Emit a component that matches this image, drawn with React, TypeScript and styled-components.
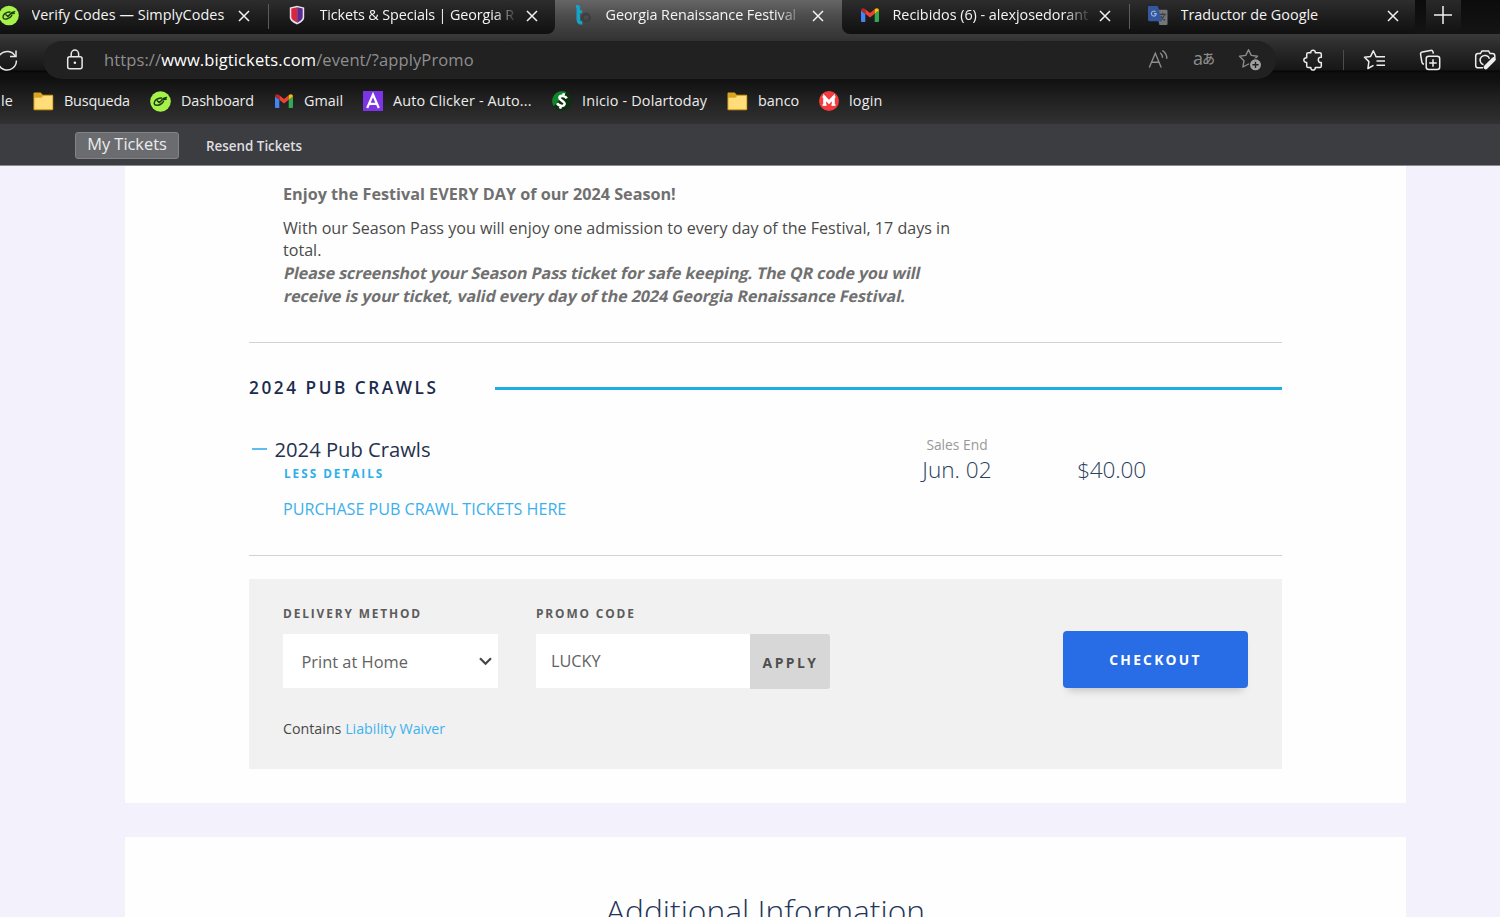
import React from 'react';
import styled, { createGlobalStyle, css } from 'styled-components';

const GlobalStyle = createGlobalStyle`
  * { box-sizing: border-box; }
  html, body { margin: 0; padding: 0; overflow: hidden; }
  body { font-family: "Open Sans", "Noto Sans", "Noto Sans CJK JP", sans-serif; background: #f3f2fc; }
  button, input { font-family: inherit; }
`;

const Screen = styled.div`
  width: 1500px;
  height: 917px;
  overflow: hidden;
  display: flex;
  flex-direction: column;
`;

/* ---------- browser chrome ---------- */

const TabStrip = styled.div`
  flex: none;
  height: 34px;
  display: flex;
  background: linear-gradient(#0c0c0c, #141414);
`;

const TabBox = styled.div<{ $w: number; $active?: boolean; $line?: boolean; $first?: boolean; $cut?: 'l' | 'r' }>`
  flex: none;
  width: ${p => p.$w}px;
  margin-left: ${p => (p.$first ? -19 : 0)}px;
  height: 34px;
  padding: 0 17px 4px 18px;
  display: flex;
  align-items: center;
  background: ${p => (p.$active ? 'linear-gradient(#666666, #4d4d4d 45%, #383838)' : 'linear-gradient(#2d2d2d, #1c1c1c 55%, #101010)')};
  ${p => p.$cut === 'r' && css`border-bottom-right-radius: 8px;`}
  ${p => p.$cut === 'l' && css`border-bottom-left-radius: 8px;`}
  ${p => p.$line && css`
    background: linear-gradient(#5c5c5c, #5c5c5c) right 4px / 1px 25px no-repeat, linear-gradient(#2d2d2d, #1c1c1c 55%, #101010);
  `}
`;

const TabJoin = styled.div`
  flex: none;
  display: flex;
  background: #3a3a3a;
`;

const TabIcon = styled.span`
  flex: none;
  width: 20px;
  height: 20px;
  margin-right: 12.5px;
  display: flex;
`;

const TabTitle = styled.span<{ $ls?: number; $fade?: number }>`
  flex: none;
  width: 198px;
  overflow: hidden;
  white-space: nowrap;
  font-size: 14.4px;
  line-height: 20px;
  color: #f4f4f4;
  letter-spacing: ${p => p.$ls || 0}px;
  ${p => p.$fade && css`
    mask-image: linear-gradient(90deg, #000 ${198 - p.$fade}px, rgba(0, 0, 0, 0.2) 193px);
  `}
`;

const CloseSlot = styled.span`
  flex: none;
  width: 14px;
  margin-left: 7px;
  display: flex;
  justify-content: center;
  padding-top: 2px;
`;

const NewTab = styled.div`
  flex: none;
  width: 35px;
  height: 32px;
  margin-left: 11px;
  display: flex;
  align-items: center;
  justify-content: center;
  padding: 0 2px 2px 0;
  background: linear-gradient(#292929, #131313);
`;

const Toolbar = styled.div`
  flex: none;
  height: 45px;
  display: flex;
  align-items: center;
  padding-top: 6px;
  background: linear-gradient(#3a3a3a 0, #2b2b2b 12px, #161616 36px, #050505 37px, #0e0e0e 39px, #101010 45px);
`;

const ReloadSlot = styled.div`
  flex: none;
  width: 43px;
  height: 38px;
  overflow: hidden;
  display: flex;
  align-items: center;
`;

const AddressBar = styled.div`
  flex: none;
  width: 1233px;
  height: 38px;
  border-radius: 19px;
  background: #212121;
  display: flex;
  align-items: center;
  padding: 0 3px 0 21px;
`;

const Url = styled.div`
  flex: 1;
  margin-left: 18px;
  font-size: 16.5px;
  line-height: 24px;
  letter-spacing: 0.11px;
  color: #8f8f8f;
  b { font-weight: 400; color: #ffffff; }
`;

const Slot = styled.div<{ $w: number }>`
  flex: none;
  width: ${p => p.$w}px;
  display: flex;
  align-items: center;
  justify-content: center;
  color: #8c8c8c;
`;

const LangGlyph = styled.span`
  font-size: 18px;
  line-height: 20px;
  display: flex;
  align-items: center;
  padding-bottom: 3px;
  span { font-size: 13px; font-weight: 500; font-family: "Noto Sans CJK JP", sans-serif; margin-left: -1px; line-height: 20px; }
`;

const Rule = styled.div`
  flex: none;
  width: 1px;
  height: 20px;
  background: #4c4c4c;
`;

const Bookmarks = styled.div`
  flex: none;
  height: 45px;
  display: flex;
  align-items: center;
  padding-bottom: 1px;
  background: linear-gradient(#101010, #1f1f1f 40%, #313131);
  color: #ececec;
  font-size: 14.4px;
  line-height: 20px;
  white-space: nowrap;
`;

const Partial = styled.span`
  flex: none;
  width: 33px;
  padding-left: 1px;
`;

const Bookmark = styled.div<{ $w: number; $ls?: number }>`
  flex: none;
  width: ${p => p.$w}px;
  display: flex;
  align-items: center;
  gap: 10px;
  letter-spacing: ${p => p.$ls || 0}px;
`;

/* ---------- ticket site ---------- */

const SiteBar = styled.div`
  flex: none;
  height: 42px;
  display: flex;
  align-items: flex-start;
  padding: 8px 0 0 75px;
  background: #3c3d41;
  border-bottom: 1px solid #8b8b8f;
`;

const MyTickets = styled.button`
  width: 104px;
  height: 27px;
  padding: 0 0 3px;
  border: 1px solid #828386;
  border-radius: 3px;
  background: #6b6c70;
  color: #ececec;
  font-size: 16.4px;
  line-height: 22px;
`;

const Resend = styled.span`
  margin-left: 27px;
  padding-top: 4px;
  font-size: 13.4px;
  font-weight: 600;
  line-height: 20px;
  color: #dedee0;
`;

const Card = styled.section<{ $h?: number; $gap?: number }>`
  flex: none;
  width: 1281px;
  height: ${p => (p.$h ? `${p.$h}px` : 'auto')};
  margin: ${p => p.$gap || 0}px 0 0 125px;
  padding: 0 124px;
  background: #fefefe;
`;

const Details = styled.div`
  padding: 17px 0 0 34px;
  height: 177px;
  border-bottom: 1px solid #d2d2d2;
  width: 1033px;
  color: #4a4a4a;
  font-size: 16.08px;
  line-height: 22.7px;
  white-space: nowrap;
`;

const Strong = styled.p`
  margin: 0 0 11px;
  font-weight: 700;
  font-size: 16.2px;
  color: #707070;
`;

const Para = styled.p`
  margin: 0;
`;

const Slanted = styled.span`
  display: block;
  font-weight: 700;
  font-size: 16.1px;
  letter-spacing: -0.11px;
  color: #707070;
  transform: skewX(-12deg);
  transform-origin: 0 75%;
`;

const GroupHead = styled.div`
  width: 1033px;
  height: 90px;
  display: flex;
  align-items: center;
`;

const GroupTitle = styled.h2`
  margin: 0;
  width: 246px;
  font-size: 17.2px;
  line-height: 24px;
  font-weight: 600;
  letter-spacing: 2.55px;
  color: #1c2b4d;
  white-space: nowrap;
`;

const GroupLine = styled.div`
  flex: 1;
  height: 3px;
  background: #20ace6;
`;

const TicketRow = styled.div`
  width: 1033px;
  height: 123px;
  display: flex;
  border-bottom: 1px solid #d2d2d2;
`;

const TicketInfo = styled.div`
  width: 643px;
`;

const TicketName = styled.div`
  height: 33px;
  display: flex;
  align-items: center;
  padding-left: 3px;
  color: #24324f;
  font-size: 20.2px;
  line-height: 33px;
`;

const Dash = styled.span`
  width: 15px;
  height: 2px;
  margin-right: 7.5px;
  background: #5dbdf0;
  margin-top: -1px;
`;

const Less = styled.div`
  padding-left: 35px;
  height: 15px;
  line-height: 15px;
  font-size: 11.7px;
  font-weight: 700;
  letter-spacing: 2.02px;
  color: #2bb0ea;
`;

const Purchase = styled.a`
  display: block;
  margin-top: 15.5px;
  padding-left: 34px;
  font-size: 16.12px;
  line-height: 24px;
  color: #3bb0ec;
`;

const Sales = styled.div`
  width: 130px;
  padding-top: 1px;
  text-align: center;
`;

const SalesLabel = styled.div`
  height: 22px;
  line-height: 22px;
  font-size: 13.8px;
  color: #999999;
`;

const Big = styled.div`
  font-size: 22.6px;
  line-height: 28px;
  font-weight: 300;
  color: #2c3e5f;
`;

const Price = styled.div`
  width: 179px;
  padding: 23px 0 0 0;
  letter-spacing: -0.2px;
  text-align: center;
`;

const Panel = styled.div`
  margin-top: 23px;
  width: 1033px;
  height: 190px;
  background: #f1f1f1;
  padding: 25px 34px 0;
`;

const PanelRow = styled.div`
  display: flex;
  height: 86px;
`;

const Field = styled.div<{ $w: number }>`
  width: ${p => p.$w}px;
`;

const Label = styled.div`
  height: 30px;
  line-height: 18px;
  font-size: 11.9px;
  font-weight: 700;
  letter-spacing: 1.87px;
  color: #5c5c5c;
`;

const Select = styled.div`
  width: 215px;
  height: 54px;
  padding: 0 6px 0 18.5px;
  display: flex;
  align-items: center;
  justify-content: space-between;
  background: #ffffff;
  color: #626262;
  font-size: 16.4px;
`;

const PromoRow = styled.div`
  display: flex;
`;

const PromoInput = styled.input`
  width: 214px;
  height: 54px;
  padding: 0 15px;
  border: 0;
  border-radius: 0;
  background: #ffffff;
  color: #626262;
  font-size: 16.3px;
  outline: none;
`;

const Apply = styled.button`
  width: 80px;
  height: 55px;
  padding: 1px 0 0 1px;
  border: 0;
  border-radius: 0 3px 3px 0;
  background: #d7d7d7;
  color: #4e4e4e;
  font-size: 13.9px;
  font-weight: 700;
  letter-spacing: 2.45px;
`;

const Checkout = styled.button`
  width: 185px;
  height: 57px;
  margin: 27px 0 0 auto;
  padding: 0;
  border: 0;
  border-radius: 4px;
  background: #286de6;
  box-shadow: 0 7px 8px -5px rgba(0, 0, 0, 0.22);
  color: #ffffff;
  font-size: 13.8px;
  font-weight: 700;
  letter-spacing: 2.25px;
`;

const Waiver = styled.div`
  margin-top: 26.5px;
  font-size: 14.25px;
  line-height: 24px;
  color: #484848;
  a { color: #3fb2ee; }
`;

const InfoTitle = styled.h1`
  margin: 0;
  padding-top: 52px;
  text-align: center;
  font-size: 31.8px;
  line-height: 44px;
  font-weight: 300;
  color: #1f3658;
`;

/* ---------- icons ---------- */

const SimplyIcon = () => (
  <svg width="21" height="21" viewBox="0 0 21 21">
    <circle cx="10.5" cy="10.5" r="10.3" fill="#a6f24a" />
    <g fill="none" stroke="#1d3b12" strokeWidth="1.5" strokeLinecap="round" strokeLinejoin="round">
      <path d="M11.500 6.900C7.500 6.700 3.700 9.700 4.200 12.600c.5 2.700 6.800 2.200 9.300-2.300" />
      <path d="M7.300 9.700l2 1.900c1.500-.8 2.600-3.600 4.600-4.300l2.600-.8M12.500 8.800l3.600-.5" />
    </g>
  </svg>
);

const ShieldIcon = () => (
  <svg width="20" height="20" viewBox="0 0 20 20">
    <path d="M10 .8l7.200 1.600v9.800c0 3.500-3.700 5.600-7.200 7.200-3.500-1.600-7.200-3.700-7.200-7.200V2.400z" fill="#e9e4ee" />
    <path d="M10.300 2.200L4.300 3.500v8.600c0 2.500 2.800 4.200 6 5.600z" fill="#d8263c" />
    <path d="M10.200 2.200l5.500 1.300v8.600c0 2.500-2.600 4.200-5.500 5.600z" fill="#5b2c91" />
  </svg>
);

const BigTicketsIcon = () => (
  <svg width="20" height="20" viewBox="0 0 20 20" fill="none">
    <circle cx="13" cy="12.700" r="3.700" stroke="#3e3f41" strokeWidth="2.600" />
    <path d="M5.300 1v13.300c0 2.600 1.200 3.700 4 3.500" stroke="#17a3c9" strokeWidth="3.600" />
    <path d="M3 1.500h3M6 6.700h3.200" stroke="#17a3c9" strokeWidth="3" />
  </svg>
);

const GmailIcon = () => (
  <svg width="20" height="20" viewBox="0 0 20 20">
    <path d="M1 5.500l4.300 3.200V17H2.300C1.500 17 1 16.500 1 15.700z" fill="#4285f4" />
    <path d="M19 5.500l-4.300 3.200V17h3c.8 0 1.300-.5 1.300-1.300z" fill="#34a853" />
    <path d="M5.300 4.300L10 7.900l4.700-3.600v4.500L10 12.400 5.300 8.800z" fill="#ea4335" />
    <path d="M1 5.500C1 3.300 3.400 2.700 4.700 3.800l.6.5v4.500L1 5.600z" fill="#c5221f" />
    <path d="M19 5.500c0-2.200-2.400-2.800-3.700-1.700l-.6.5v4.500L19 5.600z" fill="#fbbc04" />
  </svg>
);

const TranslateIcon = () => (
  <svg width="21" height="21" viewBox="0 0 21 21">
    <path d="M8 4.500h11.200c.7 0 1.300.5 1.300 1.200v13.600c0 .7-.6 1.200-1.300 1.200H12z" fill="#747678" />
    <path d="M12 9.300h7M15.500 7.700v1.600M17.600 9.300c-.7 2.800-2.300 4.700-4.800 6.200M13.500 11c.9 2 2.400 3.600 4.600 4.600" stroke="#3d4043" strokeWidth="1.200" fill="none" />
    <path d="M1.300.5h9l4.500 16H1.300C.6 16.500 0 16 0 15.300V1.700C0 1 .6.500 1.300.5z" fill="#34589f" />
    <path d="M9 8.500H6.300M7.800 6.500a2.600 2.600 0 1 0 1 2" fill="none" stroke="#9fb0d6" strokeWidth="1.200" />
  </svg>
);

const CloseIcon = () => (
  <svg width="12" height="12" viewBox="0 0 12 12" stroke="#f2f2f2" strokeWidth="1.500">
    <path d="M1 1l10 10M11 1L1 11" />
  </svg>
);

const PlusIcon = () => (
  <svg width="18" height="18" viewBox="0 0 18 18" stroke="#f2f2f2" strokeWidth="1.500">
    <path d="M9 0v18M0 9h18" />
  </svg>
);

const ReloadIcon = () => (
  <svg width="19" height="24" viewBox="0 0 19 24" fill="none" stroke="#e8e8e8" strokeWidth="1.500">
    <path d="M15.300 8.300A9.300 9.300 0 1 0 16.400 12.500" />
    <path d="M16 2.500v6h-6" />
  </svg>
);

const LockIcon = () => (
  <svg width="22" height="22" viewBox="0 0 22 22" fill="none" stroke="#e9e9e9" strokeWidth="1.500">
    <rect x="3.700" y="7.700" width="14.400" height="12" rx="2" />
    <path d="M7.200 7.700V4.800a3.700 3.700 0 0 1 7.400 0v2.900" />
    <circle cx="10.900" cy="13.700" r="1.300" fill="#e9e9e9" stroke="none" />
  </svg>
);

const ReadAloudIcon = () => (
  <svg width="22" height="22" viewBox="0 0 22 22" fill="none" stroke="currentColor" strokeWidth="1.400" strokeLinecap="round">
    <path d="M2.500 18L8.300 4.200 14 18M4.600 13.200h7.600" />
    <path d="M13.500 4.300c1.300 1 2 2.300 2 4M15.800 1.800c2.700 1.700 4 4.200 4 7.500" />
  </svg>
);

const starPath = 'M10.500 1.700l2.800 5.700 6.200.9-4.500 4.400 1.100 6.300-5.600-3-5.600 3L6 12.700 1.500 8.300l6.200-.9z';

const StarPlusIcon = () => (
  <svg width="24" height="24" viewBox="0 0 24 24" fill="none" stroke="currentColor" strokeWidth="1.400" strokeLinejoin="round">
    <path d={starPath} />
    <circle cx="17.500" cy="16.800" r="6.500" fill="#212121" stroke="none" />
    <circle cx="17.500" cy="16.800" r="5.500" fill="#a0a0a0" stroke="none" />
    <path d="M17.500 13.700v6.200M14.400 16.800h6.200" stroke="#212121" />
  </svg>
);

const PuzzleIcon = () => (
  <svg width="22" height="22" viewBox="0 0 22 22" fill="none" stroke="#ededed" strokeWidth="1.500" strokeLinejoin="round">
    <path d="M6.300 3.700h2.500c-.2-3.400 4.700-3.400 4.500 0h4.400c1 0 1.600.6 1.600 1.600v3c-4-.9-4 6 0 5.200v3.400c0 1-.6 1.600-1.600 1.600h-4.400c.2 3.400-4.700 3.400-4.500 0H6.300c-1 0-1.600-.6-1.600-1.600v-3.500c-3.800.2-3.800-4.900 0-4.700V5.300c0-1 .6-1.600 1.600-1.600z" />
  </svg>
);

const FavoritesIcon = () => (
  <svg width="23" height="22" viewBox="0 0 23 22" fill="none" stroke="#ededed" strokeWidth="1.500" strokeLinejoin="round">
    <path d="M13.500 7.400l-.6-.1-2.600-5.500-2.700 5.600-6.100.9 4.400 4.300-1 6.900 5.600-3.200" />
    <path d="M12.500 7.700H22M13.500 11.900H22M13.500 16.200H22" />
  </svg>
);

const CollectionsIcon = () => (
  <svg width="22" height="22" viewBox="0 0 22 22" fill="none" stroke="#ededed" strokeWidth="1.500">
    <rect x="7.200" y="7.200" width="13.500" height="13.300" rx="2.500" />
    <path d="M14 10.200v7.500M10.200 13.900h7.500" />
    <path d="M5 15.300c-1.300-.2-1.900-1-2.100-2.200L1.600 5.500C1.400 4.200 2 3.300 3.300 3l8.200-1.600c1.300-.2 2.200.3 2.500 1.600l.4 1.700" />
  </svg>
);

const CameraIcon = () => (
  <svg width="23" height="22" viewBox="0 0 23 22" fill="none" stroke="#ededed" strokeWidth="1.500">
    <path d="M9 18.800H4.200c-1.500 0-2.500-1-2.500-2.400V7c0-1.400 1-2.400 2.500-2.400h2.200L8 1.900h6.500l1.600 2.700h2.200c1.500 0 2.500 1 2.500 2.400v2.500" />
    <path d="M9.500 15.800a4.800 4.800 0 1 1 6-6" />
    <path d="M11.700 18.300l8-8" strokeWidth="4.200" strokeLinecap="round" />
  </svg>
);

const FolderIcon = () => (
  <svg width="21" height="21" viewBox="0 0 21 21">
    <path d="M.5 2.700c0-.7.4-1.200 1.200-1.200h6l2 2.200h9.300c.8 0 1.200.5 1.200 1.200V18c0 .8-.4 1.200-1.200 1.200H1.700c-.8 0-1.200-.4-1.200-1.200z" fill="#d9a520" />
    <path d="M1.500 6.700h6.700l2-1.800h9.100V18H1.500z" fill="#ffdd7a" />
  </svg>
);

const AutoClickerIcon = () => (
  <svg width="20" height="20" viewBox="0 0 20 20">
    <rect width="20" height="20" fill="#7c34e4" />
    <path d="M4.200 17L10 3.500 15.800 17M6 12.800h8" fill="none" stroke="#ffffff" strokeWidth="2.200" />
  </svg>
);

const DollarIcon = () => (
  <svg width="20" height="20" viewBox="0 0 20 20">
    <circle cx="10" cy="10" r="9.800" fill="#0a2f11" />
    <path d="M10 .2a9.800 9.800 0 0 0-8.300 15L14.500 1.300A9.800 9.800 0 0 0 10 .2z" fill="#11852a" />
    <g transform="rotate(14 10 10)" fill="none" stroke="#fff" strokeWidth="2.600">
      <path d="M14 6.300C12 4 6.500 4.600 6.700 7.300c.2 2.600 6.700 2.300 6.600 5.200-.2 3-5.300 3.300-7.600.9M10 2v3.200M10 14.500v3.300" />
    </g>
  </svg>
);

const MegaIcon = () => (
  <svg width="20" height="20" viewBox="0 0 20 20">
    <circle cx="10" cy="10" r="10" fill="#f23c3f" />
    <path d="M5.700 14.500v-8L10 11l4.300-4.500v8" fill="none" stroke="#fff" strokeWidth="3" />
    <path d="M3.500 14h4M12.500 14h4M3.500 6h3M13.500 6h3" stroke="#fff" strokeWidth="1.300" />
  </svg>
);

const Chevron = () => (
  <svg width="13" height="9" viewBox="0 0 13 9" fill="none" stroke="#474747" strokeWidth="2.300">
    <path d="M1 1.300l5.500 5.400L12 1.300" />
  </svg>
);

const Close = () => <CloseSlot><CloseIcon /></CloseSlot>;

export default function App() {
  return (
    <Screen>
      <GlobalStyle />
      <TabStrip>
        <TabBox $w={288} $first $line>
          <TabIcon><SimplyIcon /></TabIcon>
          <TabTitle $ls={0.06}>Verify Codes — SimplyCodes</TabTitle>
          <Close />
        </TabBox>
        <TabJoin>
          <TabBox $w={286} $cut="r">
            <TabIcon><ShieldIcon /></TabIcon>
            <TabTitle $ls={-0.13} $fade={24}>Tickets &amp; Specials | Georgia R</TabTitle>
            <Close />
          </TabBox>
          <TabBox $w={287} $active>
            <TabIcon><BigTicketsIcon /></TabIcon>
            <TabTitle $ls={-0.08} $fade={28}>Georgia Renaissance Festival</TabTitle>
            <Close />
          </TabBox>
          <TabBox $w={288} $line $cut="l">
            <TabIcon><GmailIcon /></TabIcon>
            <TabTitle $ls={-0.03} $fade={28}>Recibidos (6) - alexjosedorant</TabTitle>
            <Close />
          </TabBox>
        </TabJoin>
        <TabBox $w={285}>
          <TabIcon><TranslateIcon /></TabIcon>
          <TabTitle>Traductor de Google</TabTitle>
          <Close />
        </TabBox>
        <NewTab><PlusIcon /></NewTab>
      </TabStrip>

      <Toolbar>
        <ReloadSlot><ReloadIcon /></ReloadSlot>
        <AddressBar>
          <LockIcon />
          <Url>https://<b>www.bigtickets.com</b>/event/?applyPromo</Url>
          <Slot $w={46}><ReadAloudIcon /></Slot>
          <Slot $w={46}><LangGlyph>a<span>あ</span></LangGlyph></Slot>
          <Slot $w={46}><StarPlusIcon /></Slot>
        </AddressBar>
        <Slot $w={7} />
        <Slot $w={60}><PuzzleIcon /></Slot>
        <Rule />
        <Slot $w={61}><FavoritesIcon /></Slot>
        <Slot $w={49}><CollectionsIcon /></Slot>
        <Slot $w={63}><CameraIcon /></Slot>
      </Toolbar>

      <Bookmarks>
        <Partial>le</Partial>
        <Bookmark $w={117} $ls={-0.2}><FolderIcon />Busqueda</Bookmark>
        <Bookmark $w={124} $ls={-0.15}><SimplyIcon />Dashboard</Bookmark>
        <Bookmark $w={89}><GmailIcon />Gmail</Bookmark>
        <Bookmark $w={189} $ls={0.15}><AutoClickerIcon />Auto Clicker - Auto...</Bookmark>
        <Bookmark $w={175} $ls={0.16}><DollarIcon />Inicio - Dolartoday</Bookmark>
        <Bookmark $w={92}><FolderIcon />banco</Bookmark>
        <Bookmark $w={80} $ls={0.2}><MegaIcon />login</Bookmark>
      </Bookmarks>

      <SiteBar>
        <MyTickets>My Tickets</MyTickets>
        <Resend>Resend Tickets</Resend>
      </SiteBar>

      <Card $h={637}>
        <Details>
          <Strong>Enjoy the Festival EVERY DAY of our 2024 Season!</Strong>
          <Para>
            With our Season Pass you will enjoy one admission to every day of the Festival, 17 days in<br />
            total.
          </Para>
          <Slanted>Please screenshot your Season Pass ticket for safe keeping. The QR code you will</Slanted>
          <Slanted>receive is your ticket, valid every day of the 2024 Georgia Renaissance Festival.</Slanted>
        </Details>

        <GroupHead>
          <GroupTitle>2024 PUB CRAWLS</GroupTitle>
          <GroupLine />
        </GroupHead>

        <TicketRow>
          <TicketInfo>
            <TicketName><Dash />2024 Pub Crawls</TicketName>
            <Less>LESS DETAILS</Less>
            <Purchase>PURCHASE PUB CRAWL TICKETS HERE</Purchase>
          </TicketInfo>
          <Sales>
            <SalesLabel>Sales End</SalesLabel>
            <Big>Jun. 02</Big>
          </Sales>
          <Price><Big>$40.00</Big></Price>
        </TicketRow>

        <Panel>
          <PanelRow>
            <Field $w={253}>
              <Label>DELIVERY METHOD</Label>
              <Select>Print at Home<Chevron /></Select>
            </Field>
            <Field $w={295}>
              <Label>PROMO CODE</Label>
              <PromoRow>
                <PromoInput defaultValue="LUCKY" />
                <Apply>APPLY</Apply>
              </PromoRow>
            </Field>
            <Checkout>CHECKOUT</Checkout>
          </PanelRow>
          <Waiver>Contains <a>Liability Waiver</a></Waiver>
        </Panel>
      </Card>

      <Card $gap={34} $h={200}>
        <InfoTitle>Additional Information</InfoTitle>
      </Card>
    </Screen>
  );
}
